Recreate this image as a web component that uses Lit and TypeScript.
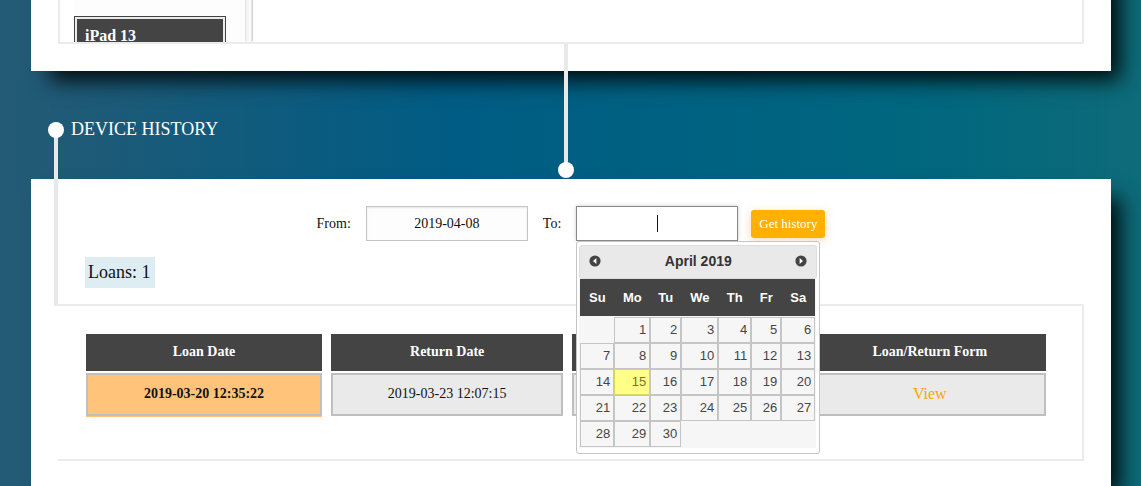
import { LitElement, html, css, svg, nothing } from "lit";
import { customElement, property } from "lit/decorators.js";

const WEEKDAYS = ["Su", "Mo", "Tu", "We", "Th", "Fr", "Sa"];

@customElement("date-picker")
class DatePicker extends LitElement {
  @property() title = "April 2019";
  @property({ type: Number }) days = 30;
  @property({ type: Number }) offset = 1;
  @property({ type: Number }) today = 15;

  static styles = css`
    :host {
      display: block;
      box-sizing: border-box;
      padding: 3px 2px 5px;
      border: 1px solid #c5c5c5;
      border-radius: 3px;
      background: #fff;
      font-family: "Liberation Sans", Arial, sans-serif;
      color: #454545;
    }
    .header {
      display: flex;
      align-items: center;
      justify-content: space-between;
      box-sizing: border-box;
      height: 34px;
      padding: 0 9px 2px;
      border: 1px solid #ddd;
      border-radius: 3px;
      background: #e9e9e9;
    }
    .title {
      font-size: 14px;
      font-weight: bold;
      line-height: 18px;
      color: #333;
    }
    .nav {
      display: flex;
      padding: 0;
      border: 0;
      background: none;
    }
    .grid {
      background: #f6f6f6;
      margin-right: 1px;
      padding: 0 1px 1px;
    }
    table {
      width: 100%;
      table-layout: fixed;
      border-collapse: collapse;
    }
    th {
      height: 37px;
      padding: 0;
      background: #444;
      color: #fff;
      font-size: 13px;
    }
    .w30 { width: 30px; }
    .w31 { width: 31px; }
    .w33 { width: 33px; }
    .w34 { width: 34px; }
    .w36 { width: 36px; }
    .w37 { width: 37px; }
    tbody::before {
      content: "";
      display: table-row;
      height: 1px;
    }
    td { padding: 0; }
    .day {
      display: block;
      padding: 4px 3px 4px 0;
      border: 1px solid #c5c5c5;
      font-size: 13px;
      line-height: 16px;
      text-align: right;
      text-decoration: none;
      color: #454545;
    }
    .today {
      background: #ffff88;
      border-color: #dad55e;
      color: #777620;
    }
  `;

  private arrow(points: string) {
    return svg`<svg width="12" height="12" viewBox="0 0 12 12" aria-hidden="true">
      <circle cx="6" cy="6" r="5.6" fill="#444"/><path d=${points} fill="#fff"/></svg>`;
  }

  render() {
    const count = Math.ceil((this.days + this.offset) / 7);
    const weeks = Array.from({ length: count }, (_, w) =>
      WEEKDAYS.map((_, d) => w * 7 + d + 1 - this.offset)
    );
    return html`
      <div class="header">
        <button class="nav" aria-label="Previous month">${this.arrow("M7.4 3v6L4 6z")}</button>
        <span class="title">${this.title}</span>
        <button class="nav" aria-label="Next month">${this.arrow("M4.6 3v6L8 6z")}</button>
      </div>
      <div class="grid">
        <table>
          <colgroup>
            <col class="w34" /><col class="w36" /><col class="w31" /><col class="w37" />
            <col class="w33" /><col class="w30" /><col />
          </colgroup>
          <thead>
            <tr>${WEEKDAYS.map((d) => html`<th scope="col">${d}</th>`)}</tr>
          </thead>
          <tbody>
            ${weeks.map(
              (week) => html`<tr>
                ${week.map(
                  (n) => html`<td>${n > 0 && n <= this.days
                    ? html`<a class="day ${n === this.today ? "today" : ""}" href="#">${n}</a>`
                    : nothing}</td>`
                )}
              </tr>`
            )}
          </tbody>
        </table>
      </div>
    `;
  }
}

@customElement("app-root")
class AppRoot extends LitElement {
  static styles = css`
    :host {
      display: flex;
      flex-direction: column;
      box-sizing: border-box;
      min-height: 100vh;
      padding: 0 30px 0 31px;
      overflow: hidden;
      background: linear-gradient(90deg, #245a74 0%, #005c84 40%, #00677f 80%, #0e6b79 100%);
      font-family: "Liberation Serif", "Times New Roman", serif;
      font-size: 14px;
      color: #111;
    }
    .panel {
      padding: 0 27px 27px;
      background: #fff;
      box-shadow: 14px 14px 20px -5px rgba(0, 0, 0, 0.9);
    }
    .scrolled {
      margin-top: -40px;
      padding-top: 40px;
    }
    .devices {
      position: relative;
      display: flex;
      height: 42px;
      padding-left: 13px;
      border: solid #ebebeb;
      border-width: 0 2px 2px;
    }
    .list {
      box-sizing: border-box;
      width: 172px;
      padding: 16px 19px 0 1px;
      overflow: hidden;
      background: #fdfdfd;
    }
    .device {
      height: 60px;
      border: 1px solid #444;
      padding: 2px;
      background: #ebebeb;
    }
    .device-name {
      display: block;
      height: 100%;
      padding: 7px 8px;
      box-sizing: border-box;
      background: #444;
      color: #fff;
      font-size: 16px;
      font-weight: bold;
      line-height: 20px;
    }
    .track {
      width: 8px;
      background: linear-gradient(90deg, #dcdcdc, #f4f4f4 20%, #fafafa 70%, #c8c8c8);
      border-radius: 0 0 2px 2px;
    }
    .connector {
      position: absolute;
      width: 4px;
      background: #e9e9e9;
    }
    .connector::after {
      content: "";
      position: absolute;
      left: -6px;
      width: 16px;
      height: 16px;
      border-radius: 50%;
      background: #fff;
    }
    .down {
      top: 100%;
      left: calc(50% - 7px);
      height: 120px;
      margin-top: 2px;
    }
    .down::after { top: 118px; }
    .section {
      position: relative;
      display: flex;
      flex: 1;
      flex-direction: column;
    }
    .heading {
      margin: 0;
      padding: 48px 40px 40px;
      font-size: 18px;
      font-weight: normal;
      line-height: 20px;
      color: #fff;
    }
    .history {
      position: relative;
      flex: 1;
      padding-top: 27px;
    }
    .up {
      top: -49px;
      left: 23px;
      height: 176px;
    }
    .up::after { top: -8px; }
    .filters {
      display: flex;
      align-items: center;
      justify-content: center;
      gap: 15px;
    }
    .field { position: relative; }
    .input {
      display: block;
      box-sizing: border-box;
      width: 162px;
      height: 35px;
      border: 1px solid #c5c5c5;
      padding: 0 8px;
      background: #fdfdfd;
      box-shadow: inset 0 1px 2px #e4e4e4;
      color: #111;
      font: inherit;
      text-align: center;
      outline: none;
    }
    .active {
      border-color: #888;
      background: linear-gradient(#111, #111) center / 1px 17px no-repeat #fff;
      box-shadow: 0 0 4px #ccc;
    }
    .popup {
      position: absolute;
      z-index: 1;
      top: 100%;
      left: 0;
      width: 244px;
    }
    .submit {
      margin-left: -2px;
      height: 28px;
      padding: 0 8px;
      border: 0;
      border-radius: 3px;
      background: #ffb000;
      box-shadow: 0 2px 8px rgba(255, 150, 50, 0.4);
      color: #fff;
      font-family: inherit;
      font-size: 13px;
    }
    .count {
      width: fit-content;
      margin: 16px 27px;
      padding: 0 4px 0 3px;
      background: #deedf2;
      font-size: 18px;
      line-height: 31px;
    }
    .loans {
      padding: 26px 27px 41px 19px;
      border: solid #ebebeb;
      border-width: 2px 2px 2px 0;
    }
    .table {
      width: 100%;
      table-layout: fixed;
      border-collapse: separate;
      border-spacing: 9px 2px;
      text-align: center;
    }
    .first { width: 236px; }
    .table th {
      height: 37px;
      padding: 0 0 2px;
      box-sizing: border-box;
      background: #444;
      color: #fff;
    }
    .table td {
      box-sizing: border-box;
      height: 43px;
      padding: 0 0 1px;
      border: 2px solid #bfbfbf;
      background: #eaeaea;
    }
    .table .loaned {
      background: #ffc379;
      box-shadow: 0 1px #ffc379;
      font-weight: bold;
    }
    .view {
      color: #ffa500;
      font-size: 16px;
      text-decoration: none;
    }
  `;

  render() {
    return html`
      <section class="panel scrolled">
        <div class="devices">
          <div class="list">
            <div class="device"><span class="device-name">iPad 13</span></div>
          </div>
          <div class="track"></div>
          <div class="connector down"></div>
        </div>
      </section>
      <section class="section">
        <h2 class="heading">DEVICE HISTORY</h2>
        <div class="panel history">
          <div class="connector up"></div>
          <form class="filters">
            <label for="from">From:</label>
            <input class="input" id="from" type="text" .value=${"2019-04-08"} />
            <label for="to">To:</label>
            <div class="field">
              <input class="input active" id="to" type="text" />
              <date-picker class="popup"></date-picker>
            </div>
            <button class="submit" type="button">Get history</button>
          </form>
          <p class="count">Loans: 1</p>
          <div class="loans">
            <table class="table">
              <colgroup><col class="first" /><col /><col /><col /></colgroup>
              <thead>
                <tr>
                  <th scope="col">Loan Date</th>
                  <th scope="col">Return Date</th>
                  <th></th>
                  <th scope="col">Loan/Return Form</th>
                </tr>
              </thead>
              <tbody>
                <tr>
                  <td class="loaned">2019-03-20 12:35:22</td>
                  <td>2019-03-23 12:07:15</td>
                  <td></td>
                  <td><a class="view" href="#">View</a></td>
                </tr>
              </tbody>
            </table>
          </div>
        </div>
      </section>
    `;
  }
}
